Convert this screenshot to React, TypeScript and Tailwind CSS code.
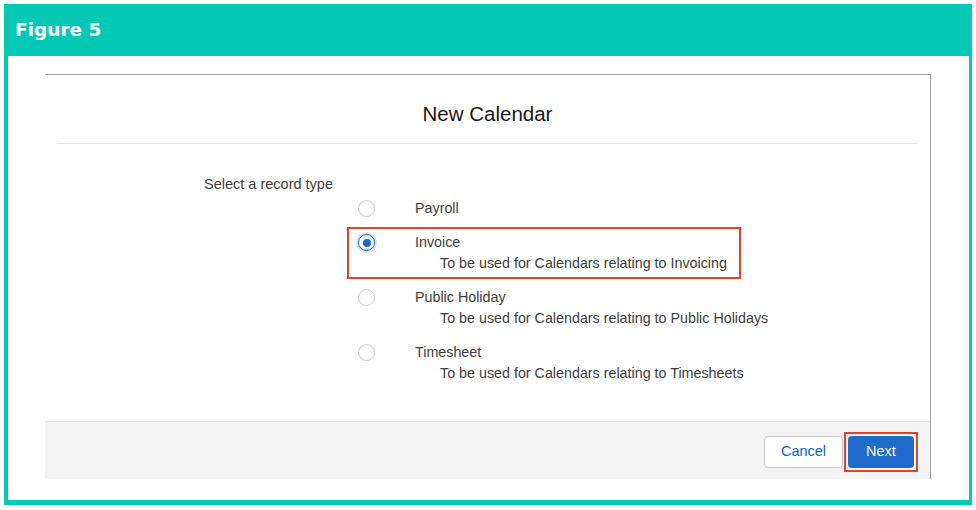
import React from "react";

const Radio = ({ checked }: { checked?: boolean }) =>
  checked ? (
    <span className="flex h-[17px] w-[17px] shrink-0 items-center justify-center rounded-full border border-[#1b6ac9] bg-white shadow-[0_0_0_2px_#d3e3f7]">
      <span className="h-[8px] w-[8px] rounded-full bg-[#1b6ac9]" />
    </span>
  ) : (
    <span className="h-[17px] w-[17px] shrink-0 rounded-full border border-[#c9c9c9] bg-white" />
  );

const Option = ({
  label,
  desc,
  checked,
  boxed,
}: {
  label: string;
  desc?: string;
  checked?: boolean;
  boxed?: boolean;
}) => (
  <div className="relative flex">
    {boxed && (
      <div className="pointer-events-none absolute left-[-11px] top-[-5px] h-[52px] w-[394px] border-2 border-[#e2432f]" />
    )}
    <div className="flex h-[21px] w-[57px] items-center">
      <Radio checked={checked} />
    </div>
    <div className="flex flex-col">
      <div className="text-[14.3px] leading-[21px] text-[#3e3e3c]">{label}</div>
      {desc && (
        <div className="pl-[25px] text-[14.3px] leading-[21px] text-[#3e3e3c]">{desc}</div>
      )}
    </div>
  </div>
);

export default function App() {
  return (
    <div
      className="h-[510px] w-[976px] bg-white pb-[5px] pl-[4px] pr-[4px] pt-[4px]"
      style={{ fontFamily: '"Liberation Sans", Arial, sans-serif' }}
    >
      <div className="flex h-full w-full flex-col bg-[#02c9b6]">
        <div className="flex h-[52px] items-center pl-[11px]">
          <span
            className="text-[18.5px] font-bold text-white"
            style={{ fontFamily: '"DejaVu Sans", sans-serif' }}
          >
            Figure 5
          </span>
        </div>
        <div className="mb-[5px] ml-[4px] mr-[3px] flex-1 bg-white pl-[37px] pt-[18px]">
          <div className="flex h-[405px] w-[886px] flex-col border-r border-t border-[#a3a3a3] bg-white">
            <div className="flex justify-center pb-[15px] pt-[25px]">
              <h1 className="text-[20.5px] leading-[28px] text-[#181818]">New Calendar</h1>
            </div>
            <div className="mx-[12px] h-px bg-[#e5e5e5]" />
            <div className="flex flex-1 flex-col pl-[159px] pt-[30px]">
              <div className="text-[14.5px] leading-[20px] text-[#3e3e3c]">Select a record type</div>
              <div className="ml-[154px] mt-[4px] flex flex-col gap-[13px]">
                <Option label="Payroll" />
                <Option
                  label="Invoice"
                  desc="To be used for Calendars relating to Invoicing"
                  checked
                  boxed
                />
                <Option
                  label="Public Holiday"
                  desc="To be used for Calendars relating to Public Holidays"
                />
                <Option
                  label="Timesheet"
                  desc="To be used for Calendars relating to Timesheets"
                />
              </div>
            </div>
            <div className="flex h-[58px] items-center justify-end gap-[5px] border-t border-[#e0e0e0] bg-[#f3f3f3] pr-[16px] pt-[3px]">
              <button className="h-[32px] w-[79px] rounded-[4px] border border-[#c9c9c9] bg-white text-[14.5px] text-[#0b65c8]">
                Cancel
              </button>
              <div className="relative">
                <div className="pointer-events-none absolute -inset-[4px] border-2 border-[#e2432f]" />
                <button className="h-[32px] w-[66px] rounded-[4px] bg-[#1f6bce] text-[14.5px] text-white">
                  Next
                </button>
              </div>
            </div>
          </div>
        </div>
      </div>
    </div>
  );
}
